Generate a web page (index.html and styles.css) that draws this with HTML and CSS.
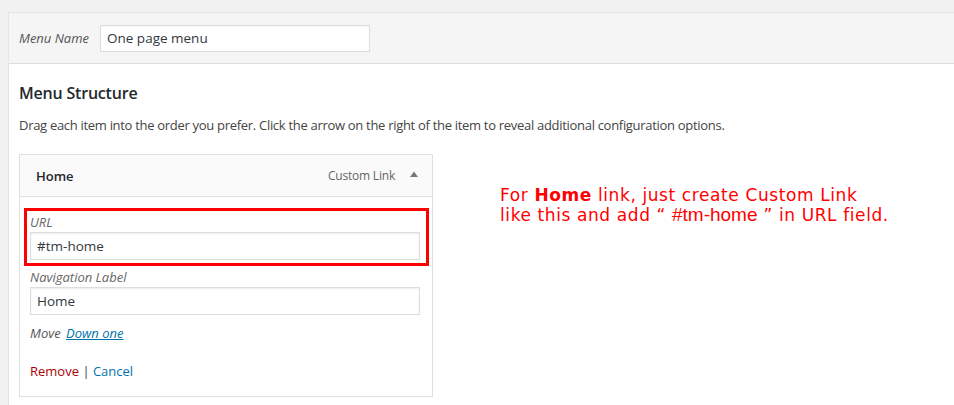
FILE: index.html
```html
<!DOCTYPE html>
<html>
<head>
<meta charset="utf-8">
<link rel="stylesheet" href="styles.css">
</head>
<body>
<div class="panel">
  <div class="panel-header">
    <label class="name-label">Menu Name</label>
    <div class="name-input">One page menu</div>
  </div>
  <div class="panel-body">
    <h3 class="title">Menu Structure</h3>
    <p class="desc">Drag each item into the order you prefer. Click the arrow on the right of the item to reveal additional configuration options.</p>
    <div class="row">
      <div class="item">
        <div class="item-bar">
          <span class="item-title">Home</span>
          <span class="item-controls">
            <span class="item-type">Custom Link</span>
            <svg class="arrow" width="10" height="8" viewBox="0 0 10 8"><path d="M1 7 L5 1.5 L9 7 Z" fill="#72777c"/></svg>
          </span>
        </div>
        <div class="item-settings">
          <div class="highlight">
            <div class="field-label">URL</div>
            <div class="field-input">#tm-home</div>
          </div>
          <div class="field">
            <div class="field-label">Navigation Label</div>
            <div class="field-input">Home</div>
          </div>
          <div class="move"><span class="move-label">Move</span> <a class="down">Down one</a></div>
          <div class="actions"><a class="remove">Remove</a> <span class="sep">|</span> <a class="cancel">Cancel</a></div>
        </div>
      </div>
      <div class="note">For <b>Home</b> link, just create Custom Link<br>like this and add &ldquo; <span class="code">#tm-home</span> &rdquo; in URL field.</div>
    </div>
  </div>
</div>
</body>
</html>
```
FILE: styles.css
```css
html, body {
  margin: 0;
  padding: 0;
  background: #f1f1f1;
  height: 405px;
  overflow: hidden;
}
body {
  font-family: "Open Sans", "Noto Sans", sans-serif;
  font-size: 13px;
  color: #444;
}
.panel {
  margin: 12px 0 0 8px;
  background: #fff;
  border: 1px solid #e5e5e5;
  border-right: none;
  height: 392px;
  overflow: hidden;
}
.panel-header {
  height: 50px;
  background: #f5f5f5;
  border-bottom: 1px solid #dddddd;
  display: flex;
  align-items: center;
  padding-left: 10px;
}
.name-label {
  font-style: italic;
  color: #555;
  width: 81px;
  flex: none;
  white-space: nowrap;
  font-size: 13px;
}
.name-input {
  box-sizing: border-box;
  width: 270px;
  height: 27px;
  flex: none;
  background: #fff;
  border: 1px solid #dddddd;
  box-shadow: inset 0 1px 2px rgba(0,0,0,0.04);
  padding: 0 5px 0 6px;
  line-height: 25px;
  font-size: 13.5px;
  color: #32373c;
}
.panel-body {
  padding: 0 10px;
}
.title {
  margin: 17px 0 0 0;
  font-size: 16px;
  letter-spacing: -0.2px;
  font-weight: 600;
  color: #23282d;
  line-height: 24px;
}
.desc {
  margin: 10px 0 0 0;
  line-height: 20px;
  color: #444;
  letter-spacing: -0.3px;
}
.row {
  display: flex;
  align-items: flex-start;
  margin-top: 19px;
}
.item {
  box-sizing: border-box;
  width: 414px;
  height: 243px;
  border: 1px solid #dfdfdf;
  background: #fff;
  flex: none;
}
.item-bar {
  height: 41px;
  background: #fafafa;
  border-bottom: 1px solid #dfdfdf;
  display: flex;
  align-items: center;
  justify-content: space-between;
  padding: 0 13px 0 16px;
}
.item-title {
  font-weight: 600;
  color: #23282d;
  font-size: 13px;
}
.item-controls {
  display: flex;
  align-items: center;
  gap: 14px;
  color: #666;
}
.item-type {
  font-size: 12px;
  color: #666;
  letter-spacing: -0.2px;
}
.arrow {
  display: block;
  margin-top: -3px;
}
.item-settings {
  padding: 11px 4px 0 4px;
}
.highlight {
  box-sizing: border-box;
  width: 405px;
  height: 58px;
  border: 3px solid #ff0000;
  padding: 2px 6px 0 3px;
}
.field {
  padding: 0 8px 0 6px;
  margin-top: 2px;
}
.field-label {
  font-style: italic;
  color: #666;
  line-height: 18px;
}
.field-input {
  box-sizing: border-box;
  width: 390px;
  height: 28px;
  border: 1px solid #dddddd;
  box-shadow: inset 0 1px 2px rgba(0,0,0,0.07);
  padding: 0 6px;
  line-height: 26px;
  font-size: 13.5px;
  color: #32373c;
  margin-top: 1px;
}
.move {
  padding-left: 6px;
  margin-top: 9px;
  line-height: 18px;
}
.move-label {
  font-style: italic;
  color: #555;
}
.down {
  font-style: italic;
  color: #0073aa;
  text-decoration: underline;
  margin-left: 2px;
}
.actions {
  padding-left: 6px;
  margin-top: 20px;
  line-height: 18px;
}
.remove { color: #a00; }
.sep { color: #444; }
.cancel { color: #0073aa; }
.note {
  flex: none;
  margin: 31px 0 0 67px;
  font-family: "DejaVu Sans", Verdana, sans-serif;
  font-size: 17px;
  letter-spacing: 0.6px;
  line-height: 20px;
  color: #ff0000;
  white-space: nowrap;
}
.note b { font-weight: bold; }
.code {
  font-family: "Liberation Sans", Arial, sans-serif;
  font-size: 19px;
  letter-spacing: 0;
}
```
